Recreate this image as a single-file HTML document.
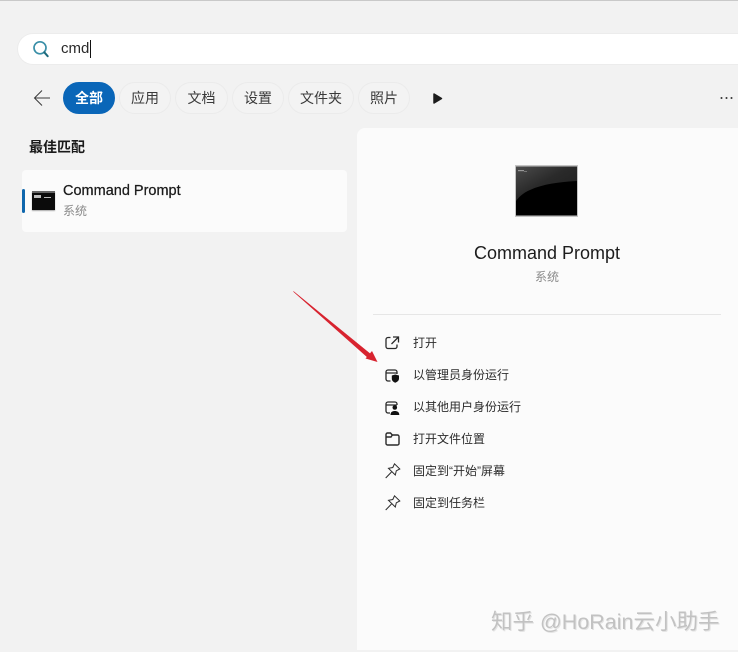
<!DOCTYPE html>
<html lang="zh-CN">
<head>
<meta charset="utf-8">
<style>
html,body{margin:0;padding:0}
body{width:738px;height:652px;overflow:hidden;position:relative;background:#f2f2f2;font-family:"Liberation Sans","Noto Sans CJK SC",sans-serif;color:#1b1b1b}
.a{position:absolute;white-space:nowrap}
.chip{position:absolute;top:82px;height:32px;line-height:31px;box-sizing:border-box;border:1px solid #ebebeb;border-radius:16px;background:#f3f3f3;text-align:center;font-size:14px;color:#3a3a3a}
.row{position:absolute;left:413px;font-size:12px;line-height:16px;color:#2c2c2c;white-space:nowrap}
svg{position:absolute;overflow:visible}
</style>
</head>
<body>
<div class="a" style="left:0;top:0;width:738px;height:1px;background:#c9c9c9"></div>

<div class="a" style="left:18px;top:34px;width:740px;height:30px;background:#fff;border-radius:15px;box-shadow:0 0 0 1px #ececec"></div>
<svg style="left:30px;top:40px" width="20" height="20" viewBox="0 0 20 20" fill="none"><circle cx="10" cy="7.800" r="6" stroke="#3a8fa8" stroke-width="1.700"/><path d="M14.200 12.200l3.500 4" stroke="#1d6a7c" stroke-width="2" stroke-linecap="round"/></svg>
<div class="a" style="left:61px;top:40px;font-size:15px;line-height:18px;color:#2a2a2a">cmd</div>
<div class="a" style="left:90px;top:40px;width:1px;height:18px;background:#111"></div>

<svg style="left:34px;top:90px" width="16" height="16" viewBox="0 0 16 16" fill="none" stroke="#3a3a3a" stroke-width="1"><path d="M0.500 8h15.500M8 0.500L0.500 8 8 15.500"/></svg>
<div class="chip" style="left:63px;width:52px;background:#0a66b8;border-color:#0a66b8;color:#fff;font-weight:bold">全部</div>
<div class="chip" style="left:119px;width:52px">应用</div>
<div class="chip" style="left:175px;width:53px">文档</div>
<div class="chip" style="left:232px;width:52px">设置</div>
<div class="chip" style="left:288px;width:66px">文件夹</div>
<div class="chip" style="left:358px;width:52px">照片</div>
<svg style="left:433px;top:93px" width="10" height="11" viewBox="0 0 10 11"><path d="M1 1L8.500 5.500 1 10z" fill="#1c1c1c" stroke="#1c1c1c" stroke-width="1.500" stroke-linejoin="round"/></svg>
<svg style="left:719px;top:96px" width="16" height="4" viewBox="0 0 16 4" fill="#333"><circle cx="2.500" cy="2" r="1"/><circle cx="7.500" cy="2" r="1"/><circle cx="12.500" cy="2" r="1"/></svg>

<div class="a" style="left:29px;top:137px;font-size:14px;line-height:20px;font-weight:bold;color:#1a1a1a">最佳匹配</div>
<div class="a" style="left:22px;top:170px;width:325px;height:62px;background:#fbfbfb;border-radius:4px"></div>
<div class="a" style="left:22px;top:189px;width:3px;height:24px;background:#0f67ad;border-radius:2px"></div>
<div class="a" style="left:32px;top:191px;width:23px;height:19px;background:#0b0b0b;box-shadow:0 1px 1px #aaa"></div>
<div class="a" style="left:32px;top:191px;width:23px;height:2px;background:#666"></div>
<div class="a" style="left:34px;top:195px;width:7px;height:3px;background:#bdbdbd"></div>
<div class="a" style="left:44px;top:197px;width:7px;height:1px;background:#bbb"></div>
<div class="a" style="left:63px;top:183px;font-size:14.500px;line-height:17px;color:#1a1a1a;-webkit-text-stroke:.25px #1a1a1a">Command Prompt</div>
<div class="a" style="left:63px;top:203px;font-size:12px;line-height:16px;color:#8a8a8a">系统</div>

<div class="a" style="left:357px;top:128px;width:381px;height:522px;background:#fbfbfb;border-radius:8px 0 0 0"></div>

<svg style="left:515px;top:165px" width="64" height="53" viewBox="0 0 64 53">
<defs>
<linearGradient id="g" x1="0" y1="0" x2="1" y2="1"><stop offset="0" stop-color="#4c4c4c"/><stop offset=".45" stop-color="#2a2a2a"/><stop offset="1" stop-color="#1c1c1c"/></linearGradient>
</defs>
<rect x="0" y="0" width="63" height="52" fill="#c4c4c4"/>
<rect x="1" y="1.500" width="61" height="49" fill="#000"/>
<path d="M1 1.500h61V16C44 17 28 19 15 25 8 28 4 32 1 36z" fill="url(#g)"/>
<rect x="3" y="5" width="6" height="1.200" fill="#999"/>
<rect x="9" y="6" width="3" height="1" fill="#777"/>
</svg>

<div class="a" style="left:474px;top:243px;font-size:18px;line-height:20px;color:#1c1c1c">Command Prompt</div>
<div class="a" style="left:535px;top:269px;font-size:12px;line-height:16px;color:#8a8a8a">系统</div>
<div class="a" style="left:373px;top:314px;width:348px;height:1px;background:#e6e6e6"></div>

<svg style="left:385px;top:336px" width="15" height="14" viewBox="0 0 15 14" fill="none" stroke="#2a2a2a" stroke-width="1.300"><path d="M5.500 1.500H3a2 2 0 0 0-2 2v7a2 2 0 0 0 2 2h7a2 2 0 0 0 2-2V8.500"/><path d="M8 1h5.500v5.500M13.500 1L6.500 8"/></svg>
<div class="row" style="top:335px">打开</div>

<svg style="left:385px;top:369px" width="15" height="14" viewBox="0 0 15 14" fill="none" stroke="#2a2a2a" stroke-width="1.300"><path d="M5.500 12H3a2 2 0 0 1-2-2V3a2 2 0 0 1 2-2h7a2 2 0 0 1 2 2v2M1 4h11"/><path d="M6.800 6.500l3.400-1 3.800 1v3c0 2.200-1.700 3.400-3.800 4.200-2-.8-3.400-2-3.400-4.200z" fill="#111" stroke="none"/></svg>
<div class="row" style="top:367px">以管理员身份运行</div>

<svg style="left:385px;top:401px" width="15" height="14" viewBox="0 0 15 14" fill="none" stroke="#2a2a2a" stroke-width="1.300"><path d="M5 12H3a2 2 0 0 1-2-2V3a2 2 0 0 1 2-2h7a2 2 0 0 1 2 2v1M1 4h11"/><circle cx="9.800" cy="6.500" r="2.300" fill="#111" stroke="none"/><path d="M5.500 14c0-3 1.800-4 4.300-4s4.500 1 4.500 4z" fill="#111" stroke="none"/></svg>
<div class="row" style="top:399px">以其他用户身份运行</div>

<svg style="left:385px;top:432px" width="15" height="14" viewBox="0 0 15 14" fill="none" stroke="#2a2a2a" stroke-width="1.400"><path d="M1 2.500A1.500 1.500 0 0 1 2.500 1h3l1.800 2h5.200A1.500 1.500 0 0 1 14 4.500v7a1.500 1.500 0 0 1-1.500 1.500h-10A1.500 1.500 0 0 1 1 11.500z"/><path d="M1 5h5l1.300-2"/></svg>
<div class="row" style="top:431px">打开文件位置</div>

<svg style="left:385px;top:463px" width="15" height="16" viewBox="0 0 15 16" fill="none" stroke="#2a2a2a" stroke-width="1"><path d="M9.500 0.800L14.800 6 11.300 7.800 10.300 12 3.500 5.300 7.800 4.500z"/><path d="M6.500 9L0.700 15"/></svg>
<div class="row" style="top:463px">固定到“开始”屏幕</div>

<svg style="left:385px;top:495px" width="15" height="16" viewBox="0 0 15 16" fill="none" stroke="#2a2a2a" stroke-width="1"><path d="M9.500 0.800L14.800 6 11.300 7.800 10.300 12 3.500 5.300 7.800 4.500z"/><path d="M6.500 9L0.700 15"/></svg>
<div class="row" style="top:495px">固定到任务栏</div>

<svg style="left:0;top:0" width="738" height="652" viewBox="0 0 738 652"><path d="M293.500 291.500L371 354.500 368.500 358z" fill="#d8232f" stroke="#d8232f" stroke-width=".6"/><path d="M377.500 362L365.500 358.500 372 351z" fill="#d8232f"/></svg>

<div class="a" style="left:491px;top:609px;font-size:21.500px;line-height:26px;color:#c2c2c2;text-shadow:1px 1px 0 #e4e4e4">知乎 @HoRain云小助手</div>
</body>
</html>
